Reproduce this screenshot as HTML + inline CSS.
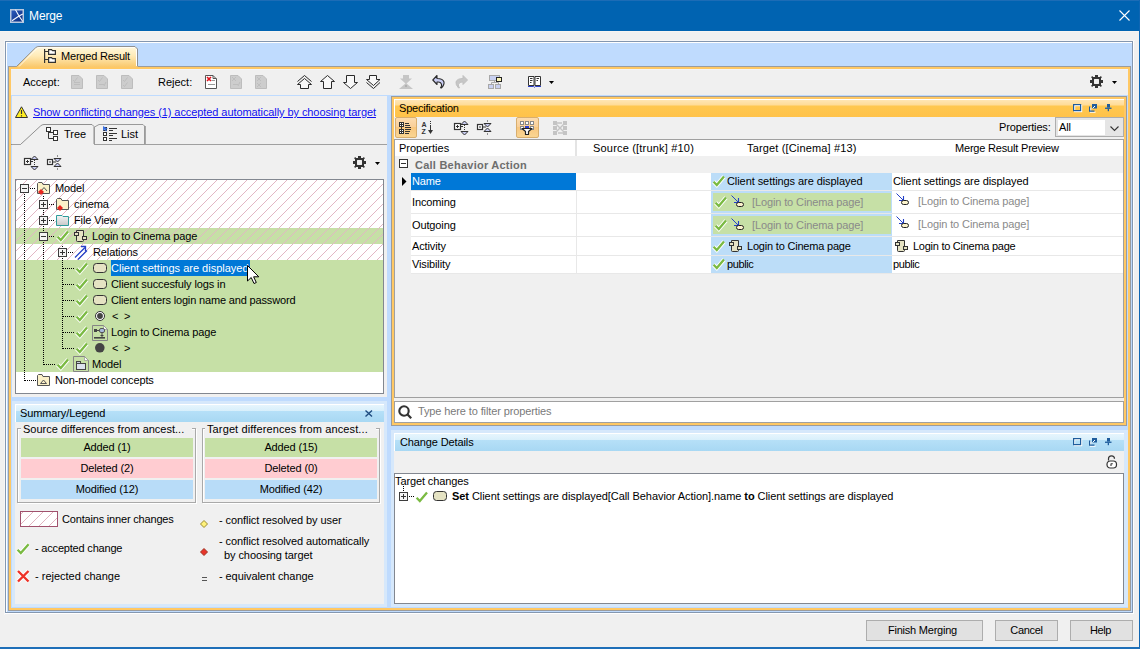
<!DOCTYPE html>
<html><head><meta charset="utf-8"><title>Merge</title>
<style>
*{box-sizing:border-box;margin:0;padding:0}
html,body{width:1140px;height:649px;overflow:hidden;background:#F0F0F0;font-family:"Liberation Sans",sans-serif;font-size:11px;color:#000}
.a{position:absolute}
.t{position:absolute;white-space:nowrap;line-height:13px;font-size:11px;letter-spacing:-0.12px}
svg{position:absolute;overflow:visible}
</style></head><body>
<!-- TITLE BAR -->
<div class="a" style="left:0;top:0;width:1140px;height:31px;background:#0063B1"></div>
<div class="a" style="left:0;top:31px;width:1140px;height:1px;background:#F7F4F1"></div>
<div class="a" style="left:0;top:0;width:1140px;height:1px;background:#1C6CB6"></div>
<div class="a" style="left:1139px;top:0;width:1px;height:649px;background:#0F66B3"></div>
<div class="a" style="left:0;top:647px;width:1140px;height:2px;background:#1E6FB8"></div>
<svg style="left:10px;top:9px" width="14" height="14" viewBox="0 0 14 14"><defs><linearGradient id="tig" x1="0" y1="0" x2="1" y2="1"><stop offset="0" stop-color="#2C5CC0"/><stop offset="1" stop-color="#0A2A7A"/></linearGradient></defs><rect x="0.75" y="0.75" width="12.5" height="12.5" fill="url(#tig)" stroke="#B8C8E0" stroke-width="1.5"/><path d="M5.5 0.8 L9 7 L12.8 12.5 M2 11.8 L9 7 L12.8 5" stroke="#F4F8FF" stroke-width="1.1" fill="none"/></svg>
<div class="t" style="left:29px;top:9px;font-size:12px;line-height:15px;color:#fff">Merge</div>
<svg style="left:1119px;top:10px" width="11" height="11" viewBox="0 0 11 11"><path d="M0.5 0.5 L10.5 10.5 M10.5 0.5 L0.5 10.5" stroke="#fff" stroke-width="1.1"/></svg>

<!-- OUTER PANEL -->
<div class="a" style="left:4px;top:40px;width:1131px;height:575px;border-left:1px solid #F7F7F7;border-top:1px solid #F7F7F7"></div>
<div class="a" style="left:5px;top:41px;width:1128px;height:572px;border:1px solid #8497B0;background:#BFDBFE"></div>
<div class="a" style="left:6px;top:42px;width:1px;height:570px;background:#fff"></div>
<div class="a" style="left:6px;top:42px;width:1126px;height:1px;background:#fff"></div>
<div class="a" style="left:5px;top:613px;width:1129px;height:1px;background:#fff"></div>
<div class="a" style="left:1133px;top:41px;width:1px;height:573px;background:#fff"></div>

<!-- ORANGE FRAME -->
<div class="a" style="left:8px;top:66px;width:1123px;height:545px;border:1px solid #9C9C9C;background:#FFC864"></div>
<div class="a" style="left:11px;top:69px;width:1117px;height:539px;background:#F0F0F0"></div>
<div class="a" style="left:11px;top:69px;width:1117px;height:1px;background:#F3F5F8"></div>

<!-- TAB Merged Result -->
<svg style="left:0;top:0" width="160" height="70" viewBox="0 0 160 70">
 <defs><linearGradient id="tabg" x1="0" y1="0" x2="0" y2="1"><stop offset="0" stop-color="#FFF8DE"/><stop offset="0.45" stop-color="#FFEBB8"/><stop offset="1" stop-color="#F9C86C"/></linearGradient></defs>
 <path d="M16 67 L35.5 47.8 Q36.8 46.5 39 46.5 H135 L137.5 49 V67 Z" fill="url(#tabg)"/>
 <path d="M16.5 66.5 L35.5 47.8 Q36.8 46.5 39 46.5 H135 L137.5 49 V66" fill="none" stroke="#8F8F8F" stroke-width="1"/>
 <path d="M19 66.5 L36.5 48.8 Q37.5 47.6 39 47.6 H135" fill="none" stroke="#FFFFFF" stroke-width="1" opacity="0.8"/>
 <path d="M136.5 49 V66" fill="none" stroke="#FFFFFF" stroke-width="1"/>
</svg>
<svg style="left:44px;top:49px" width="13" height="15"><path d="M0.6 0 V14 M0.6 2.5 H4 M0.6 10.5 H4" stroke="#333" stroke-width="1.2" fill="none"/><path d="M4.6 0.6 H7.5 L8.5 1.6 H11.4 V5.4 H4.6 Z M4.6 8.6 H7.5 L8.5 9.6 H11.4 V13.4 H4.6 Z" fill="#fff" stroke="#333" stroke-width="1.2"/></svg>
<div class="t" style="left:61px;top:50px;letter-spacing:-0.2px">Merged Result</div>

<!-- MAIN TOOLBAR -->
<div class="t" style="left:23px;top:76px;letter-spacing:0px">Accept:</div>
<div class="t" style="left:158px;top:76px;letter-spacing:0px">Reject:</div>

<!-- accept disabled -->
<svg style="left:71px;top:75px" width="12" height="14"><path d="M0.5 0.5 H8 L11.5 4 V13.5 H0.5 Z" fill="#CDCDCD" stroke="#BDBDBD"/><path d="M2 5 L3.5 6.5 L6.5 2.5 M3 9.5 H9 M3 7.5 H9" stroke="#BEBEBE" fill="none"/></svg>
<svg style="left:96px;top:75px" width="12" height="14"><path d="M0.5 0.5 H8 L11.5 4 V13.5 H0.5 Z" fill="#CDCDCD" stroke="#BDBDBD"/><path d="M2 5 L3.5 6.5 L6.5 2.5 M3 9.5 H8 M10 7 L8 11" stroke="#BEBEBE" fill="none"/></svg>
<svg style="left:121px;top:75px" width="12" height="14"><path d="M0.5 0.5 H8 L11.5 4 V13.5 H0.5 Z" fill="#CDCDCD" stroke="#BDBDBD"/><path d="M2 5 L3.5 6.5 L6.5 2.5 M2 10 L3.5 11.5 L6.5 7.5" stroke="#BEBEBE" fill="none"/></svg>
<!-- reject -->
<svg style="left:205px;top:75px" width="12" height="14"><path d="M0.5 0.5 H8 L11.5 4 V13.5 H0.5 Z" fill="#fff" stroke="#555"/><path d="M8 0.5 V3.5 H11.5" fill="none" stroke="#555"/><path d="M2 2 L6 6 M6 2 L2 6" stroke="#E0141E" stroke-width="1.6"/><path d="M6.5 5.5 H10 M3 9.5 H10" stroke="#999" fill="none"/></svg>
<svg style="left:230px;top:75px" width="12" height="14"><path d="M0.5 0.5 H8 L11.5 4 V13.5 H0.5 Z" fill="#CDCDCD" stroke="#BDBDBD"/><path d="M2 2 L6 6 M6 2 L2 6 M3 9.5 H8 M10 7 L8 11" stroke="#BEBEBE" fill="none"/></svg>
<svg style="left:255px;top:75px" width="12" height="14"><path d="M0.5 0.5 H8 L11.5 4 V13.5 H0.5 Z" fill="#CDCDCD" stroke="#BDBDBD"/><path d="M2 2 L6 6 M6 2 L2 6 M2 8 L6 12 M6 8 L2 12" stroke="#BEBEBE" fill="none"/></svg>
<!-- arrows -->
<svg style="left:297px;top:75px" width="15" height="15"><path d="M0.5 6.5 L7.5 0.5 L14.5 6.5" fill="none" stroke="#2A2A2A"/><path d="M7.5 3.5 L14.5 9.5 H11.5 V13.5 H3.5 V9.5 H0.5 Z" fill="#F8F8F8" stroke="#2A2A2A"/></svg>
<svg style="left:320px;top:75px" width="15" height="15"><path d="M7.5 0.5 L14.5 6.5 H11.5 V13.5 H3.5 V6.5 H0.5 Z" fill="#F8F8F8" stroke="#2A2A2A"/></svg>
<svg style="left:343px;top:75px" width="15" height="15"><path d="M3.5 0.5 H11.5 V7.5 H14.5 L7.5 13.5 L0.5 7.5 H3.5 Z" fill="#F8F8F8" stroke="#2A2A2A"/></svg>
<svg style="left:366px;top:75px" width="15" height="15"><path d="M3.5 0.5 H10.5 V4.5 H14 L7.5 10.5 L0.5 4.5 H3.5 Z" fill="#F8F8F8" stroke="#2A2A2A"/><path d="M0.5 7.5 L7.5 13.5 L14 7.5" fill="none" stroke="#2A2A2A"/></svg>
<!-- disabled funnel -->
<svg style="left:399px;top:75px" width="14" height="14"><path d="M4 0 H10 V3.5 H13 L7 9 L1 3.5 H4 Z" fill="#C6C6C6"/><path d="M7 8 L14 14 H0 Z" fill="#C6C6C6"/><rect x="6" y="10" width="2" height="2" fill="#B0B0B0"/></svg>
<!-- undo / redo -->
<svg style="left:432px;top:75px" width="14" height="14"><path d="M5 0.5 L0.8 5 L5 9.5 V7 Q9 6.5 9.5 9.5 Q10 11 8.5 12.8 L9.5 13 Q12.5 9.5 12 7 Q11 3.5 5 3.5 Z" fill="#C8CCF2" stroke="#2A2A2A" stroke-width="1.1" stroke-linejoin="round"/></svg>
<svg style="left:455px;top:75px" width="14" height="14"><path d="M8 0.5 L12.5 5 L8 9.5 V7 Q4 6.5 3.5 9.5 Q3 11 4.5 12.8 L3.5 13 Q0.5 9.5 1 7 Q2 3.5 8 3.5 Z" fill="#C6C6C6" stroke="#C0C0C0" stroke-width="1"/></svg>
<!-- hierarchy -->
<svg style="left:488px;top:75px" width="14" height="14"><rect x="1.5" y="0.5" width="10" height="5" fill="#C8D0F0" stroke="#A8A8A8"/><path d="M6.5 5.5 V7.5 M3.5 7.5 H10.5 M3.5 7.5 V9 M10.5 7.5 V9" stroke="#A8A8A8" fill="none"/><rect x="0.5" y="9.5" width="5" height="4" fill="#C8D0F0" stroke="#A8A8A8"/><rect x="7.5" y="9.5" width="5" height="4" fill="#C8D0F0" stroke="#A8A8A8"/><rect x="8.5" y="2.5" width="5" height="4" fill="#FAF6B8" stroke="#222"/></svg>
<!-- book -->
<svg style="left:528px;top:76px" width="14" height="12"><path d="M0.5 0.5 H6 V9.5 H0.5 Z M7 0.5 H12.5 V9.5 H7 Z" fill="#fff" stroke="#333"/><path d="M2 2.5 H4.5 M2 4.5 H4.5 M2 6.5 H3.5 M8.5 2.5 H11 M8.5 4.5 H10" stroke="#333"/><path d="M0 10.5 H5.5 L6.5 11.3 L7.5 10.5 H13" stroke="#2B3FD0" fill="none"/></svg>
<svg style="left:549px;top:81px" width="6" height="4"><path d="M0 0 H5 L2.5 3 Z" fill="#000"/></svg>
<!-- gear -->
<svg style="left:1089px;top:74px" width="15" height="15" viewBox="0 0 15 15"><path fill-rule="evenodd" fill="#333" d="M3 3 H12 V12 H3 Z M5.8 5 H9.2 L10 5.8 V9.2 L9.2 10 H5.8 L5 9.2 V5.8 Z M6 1 H9 V3 H6 Z M6 12 H9 V14 H6 Z M1 6 H3 V9 H1 Z M12 6 H14 V9 H12 Z"/><path d="M2.6 2.6 L4.5 4.5 M12.4 2.6 L10.5 4.5 M2.6 12.4 L4.5 10.5 M12.4 12.4 L10.5 10.5" stroke="#333" stroke-width="1.6"/><path fill="#F0F0F0" d="M5.8 5 H9.2 L10 5.8 V9.2 L9.2 10 H5.8 L5 9.2 V5.8 Z"/></svg>
<svg style="left:1112px;top:81px" width="6" height="4"><path d="M0 0 H5 L2.5 3 Z" fill="#000"/></svg>

<div class="a" style="left:11px;top:95px;width:1117px;height:1px;background:#BFDBFE"></div>

<!-- SPLITTER AREA -->
<div class="a" style="left:11px;top:96px;width:1117px;height:512px;background:#BFDBFE"></div>
<!-- LEFT PANEL -->
<div class="a" style="left:12px;top:96px;width:375px;height:301px;background:#F0F0F0"></div>

<!-- warning + link -->
<svg style="left:15px;top:106px" width="14" height="13"><path d="M6.5 0.8 L12.5 11.5 H0.5 Z" fill="#FFEE22" stroke="#333" stroke-linejoin="miter"/><path d="M6.5 4 V8 M6.5 9.3 V10.5" stroke="#333" stroke-width="1.2"/></svg>
<div class="t" style="left:33px;top:106px;color:#1010F0;text-decoration:underline;letter-spacing:-0.08px">Show conflicting changes (1) accepted automatically by choosing target</div>
<!-- tabs -->
<svg style="left:11px;top:120px" width="140" height="26">
 <path d="M0 24.5 H9.5 L29.5 6 Q31 4.5 33 4.5 H81 L83 6.5 V24.5" fill="#F0F0F0" stroke="#8F8F8F"/>
 <path d="M83.5 24.5 V7 L88 4.5 H132 L133.5 6 V24.5" fill="#F0F0F0" stroke="#9A9A9A"/>
 <path d="M134.5 6 V24.5" stroke="#A8A8A8"/>
 <path d="M84 24.5 H140" stroke="#9A9A9A"/>
</svg>
<div class="a" style="left:12px;top:144px;width:375px;height:1px;background:#A0A0A0"></div>
<div class="a" style="left:21px;top:144px;width:73px;height:1px;background:#F0F0F0"></div>
<svg style="left:46px;top:127px" width="14" height="14"><rect x="0.5" y="0.5" width="4" height="4" fill="#fff" stroke="#333"/><rect x="7.5" y="3.5" width="4" height="4" fill="#fff" stroke="#333"/><rect x="7.5" y="9.5" width="4" height="4" fill="#fff" stroke="#333"/><path d="M2.5 4.5 V11.5 H7.5 M2.5 5.5 H7.5" fill="none" stroke="#333"/></svg>
<div class="t" style="left:64px;top:128px;letter-spacing:0px">Tree</div>
<svg style="left:103px;top:126px" width="15" height="16"><rect x="0.5" y="1.5" width="3" height="3" fill="#fff" stroke="#333"/><path d="M0 0 V5 L1.5 3.5 L3 5.5 L4 5 L3 3 H5 Z" fill="#3A6FE0"/><rect x="0.5" y="6.5" width="3" height="3" fill="#fff" stroke="#333"/><rect x="0.5" y="11.5" width="3" height="3" fill="#fff" stroke="#333"/><path d="M6 2.5 H14 M6 4.5 H10 M6 7.5 H14 M6 9.5 H10 M6 12.5 H14 M6 14.5 H9" stroke="#333"/></svg>
<div class="t" style="left:121px;top:128px;letter-spacing:0px">List</div>
<!-- expand/collapse icons -->
<svg style="left:23px;top:155px" width="17" height="17"><rect x="1.5" y="3.5" width="6" height="6" fill="#fff" stroke="#333" stroke-width="1.2"/><path d="M3 6.5 H6 M4.5 5 V8 M7.5 6.5 H10" stroke="#333"/><path d="M11.5 1 L15 4.5 H8 Z" fill="#C8CCF2" stroke="#333"/><path d="M8 11.5 H15 L11.5 15 Z" fill="#C8CCF2" stroke="#333"/><path d="M11.5 5 V11" stroke="#333" stroke-dasharray="1 1"/></svg>
<svg style="left:46px;top:155px" width="17" height="17"><rect x="1.5" y="4.5" width="5" height="5" fill="#fff" stroke="#333" stroke-width="1.2"/><path d="M3 7 H5 M7 7 H10" stroke="#333"/><path d="M8 3.5 H15 L11.5 7 Z" fill="#C8CCF2" stroke="#333"/><path d="M11.5 8 L15 11.5 H8 Z" fill="#C8CCF2" stroke="#333"/><rect x="11" y="0.5" width="1" height="1" fill="#333"/><rect x="11" y="13.5" width="1" height="1" fill="#333"/></svg>
<svg style="left:352px;top:155px" width="15" height="15" viewBox="0 0 15 15"><path fill-rule="evenodd" fill="#333" d="M3 3 H12 V12 H3 Z M5.8 5 H9.2 L10 5.8 V9.2 L9.2 10 H5.8 L5 9.2 V5.8 Z M6 1 H9 V3 H6 Z M6 12 H9 V14 H6 Z M1 6 H3 V9 H1 Z M12 6 H14 V9 H12 Z"/><path d="M2.6 2.6 L4.5 4.5 M12.4 2.6 L10.5 4.5 M2.6 12.4 L4.5 10.5 M12.4 12.4 L10.5 10.5" stroke="#333" stroke-width="1.6"/><path fill="#F0F0F0" d="M5.8 5 H9.2 L10 5.8 V9.2 L9.2 10 H5.8 L5 9.2 V5.8 Z"/></svg>
<svg style="left:375px;top:162px" width="6" height="4"><path d="M0 0 H5 L2.5 3 Z" fill="#000"/></svg>
<!-- TREE BOX -->
<div class="a" style="left:15px;top:179px;width:369px;height:215px;border:1px solid #828790;background:#fff"></div>
<svg style="left:16px;top:180px" width="367" height="80"><defs><pattern id="hatch" patternUnits="userSpaceOnUse" width="10" height="10" x="1" y="0"><path d="M-1 11 L11 -1" stroke="#E2B6C4" stroke-width="1"/></pattern></defs><rect x="0" y="48" width="367" height="16" fill="#C6E0A6"/><rect width="367" height="80" fill="url(#hatch)"/></svg>
<div class="a" style="left:16px;top:260px;width:367px;height:112px;background:#C6E0A6"></div>
<div class="a" style="left:24px;top:194px;width:1px;height:187px;background:repeating-linear-gradient(#000 0 1px,transparent 1px 2px)"></div>
<div class="a" style="left:43px;top:196px;width:1px;height:169px;background:repeating-linear-gradient(#000 0 1px,transparent 1px 2px)"></div>
<div class="a" style="left:62px;top:246px;width:1px;height:103px;background:repeating-linear-gradient(#000 0 1px,transparent 1px 2px)"></div>
<svg style="left:20px;top:184px" width="9" height="9"><rect x="0.5" y="0.5" width="8" height="8" fill="#F4F4F4" stroke="#3C3C3C"/><path d="M2 4.5 H7" stroke="#333"/></svg>
<div class="a" style="left:30px;top:188px;width:6px;height:1px;background:repeating-linear-gradient(90deg,#000 0 1px,transparent 1px 2px)"></div>
<svg style="left:37px;top:182px" width="14" height="13"><path d="M0.5 1.5 V11.5 H12.5 V2.5 H6 L5 0.5 H1.5 Z" fill="#FBF1C8" stroke="#555"/><path d="M4 9 L7 5.5 L10 9" fill="none" stroke="#555"/><path d="M4 7 L7 10 L4 13 L1 10 Z" fill="#E8251E"/></svg>
<div class="t" style="left:55px;top:182px;letter-spacing:-0.1px">Model</div>
<svg style="left:39px;top:200px" width="9" height="9"><rect x="0.5" y="0.5" width="8" height="8" fill="#F4F4F4" stroke="#3C3C3C"/><path d="M2 4.5 H7" stroke="#333"/><path d="M4.5 2 V7" stroke="#333"/></svg>
<div class="a" style="left:49px;top:204px;width:6px;height:1px;background:repeating-linear-gradient(90deg,#000 0 1px,transparent 1px 2px)"></div>
<svg style="left:56px;top:198px" width="14" height="13"><path d="M0.5 1.5 V11.5 H12.5 V2.5 H6 L5 0.5 H1.5 Z" fill="#FBF1C8" stroke="#555"/><path d="M4 7 L7 10 L4 13 L1 10 Z" fill="#E8251E"/></svg>
<div class="t" style="left:74px;top:198px">cinema</div>
<svg style="left:39px;top:216px" width="9" height="9"><rect x="0.5" y="0.5" width="8" height="8" fill="#F4F4F4" stroke="#3C3C3C"/><path d="M2 4.5 H7" stroke="#333"/><path d="M4.5 2 V7" stroke="#333"/></svg>
<div class="a" style="left:49px;top:220px;width:6px;height:1px;background:repeating-linear-gradient(90deg,#000 0 1px,transparent 1px 2px)"></div>
<svg style="left:56px;top:215px" width="14" height="11"><defs><linearGradient id="fv" x1="0" y1="0" x2="0" y2="1"><stop offset="0" stop-color="#F4F4F4"/><stop offset="1" stop-color="#C8C8C8"/></linearGradient></defs><path d="M0.5 0.5 H6 L7 1.5 H12.5 V10.5 H0.5 Z" fill="url(#fv)" stroke="#2E9A9A"/></svg>
<div class="t" style="left:74px;top:214px">File View</div>
<svg style="left:39px;top:232px" width="9" height="9"><rect x="0.5" y="0.5" width="8" height="8" fill="#F4F4F4" stroke="#3C3C3C"/><path d="M2 4.5 H7" stroke="#333"/></svg>
<div class="a" style="left:49px;top:236px;width:6px;height:1px;background:repeating-linear-gradient(90deg,#000 0 1px,transparent 1px 2px)"></div>
<svg style="left:55px;top:229px" width="16" height="15"><path d="M2.6 7.8 L5.8 11 L13 2.6" fill="none" stroke="#fff" stroke-width="4.2" stroke-linecap="butt" stroke-linejoin="miter"/><path d="M2.6 7.8 L5.8 11 L13 2.6" fill="none" stroke="#7ABA42" stroke-width="2.3"/></svg>
<svg style="left:74px;top:230px" width="14" height="13"><path d="M2.5 0.5 H9.5 V10.5 Q9.5 11.5 8.5 11.5 H3.5 Q2.5 11.5 2.5 10.5 Z" fill="#E6E3C4" stroke="#333"/><rect x="0.5" y="2.5" width="4" height="3" fill="#E6E3C4" stroke="#333"/><rect x="8.5" y="6.5" width="4" height="3" fill="#E6E3C4" stroke="#333"/></svg>
<div class="t" style="left:92px;top:230px">Login to Cinema page</div>
<svg style="left:58px;top:248px" width="9" height="9"><rect x="0.5" y="0.5" width="8" height="8" fill="#F4F4F4" stroke="#3C3C3C"/><path d="M2 4.5 H7" stroke="#333"/><path d="M4.5 2 V7" stroke="#333"/></svg>
<div class="a" style="left:68px;top:252px;width:6px;height:1px;background:repeating-linear-gradient(90deg,#000 0 1px,transparent 1px 2px)"></div>
<svg style="left:74px;top:245px" width="14" height="15"><path d="M1 12.5 L11 2.5 M4 14.5 L13 5.5" stroke="#2440C8" stroke-width="1.3" fill="none"/><path d="M7 1.5 H11.5 V6" stroke="#2440C8" stroke-width="1.3" fill="none"/></svg>
<div class="t" style="left:93px;top:246px">Relations</div>
<div class="a" style="left:63px;top:268px;width:11px;height:1px;background:repeating-linear-gradient(90deg,#000 0 1px,transparent 1px 2px)"></div>
<svg style="left:74px;top:261px" width="16" height="15"><path d="M2.6 7.8 L5.8 11 L13 2.6" fill="none" stroke="#fff" stroke-width="4.2" stroke-linecap="butt" stroke-linejoin="miter"/><path d="M2.6 7.8 L5.8 11 L13 2.6" fill="none" stroke="#7ABA42" stroke-width="2.3"/></svg>
<svg style="left:93px;top:263px" width="15" height="11"><rect x="0.5" y="0.5" width="13" height="9" rx="3" ry="3" fill="#E5E3C3" stroke="#333"/></svg>
<div class="a" style="left:111px;top:260px;width:139px;height:16px;background:#0078D7"></div>
<div class="t" style="left:111px;top:262px;color:#fff;letter-spacing:0px">Client settings are displayed</div>
<div class="a" style="left:63px;top:284px;width:11px;height:1px;background:repeating-linear-gradient(90deg,#000 0 1px,transparent 1px 2px)"></div>
<svg style="left:74px;top:277px" width="16" height="15"><path d="M2.6 7.8 L5.8 11 L13 2.6" fill="none" stroke="#fff" stroke-width="4.2" stroke-linecap="butt" stroke-linejoin="miter"/><path d="M2.6 7.8 L5.8 11 L13 2.6" fill="none" stroke="#7ABA42" stroke-width="2.3"/></svg>
<svg style="left:93px;top:279px" width="15" height="11"><rect x="0.5" y="0.5" width="13" height="9" rx="3" ry="3" fill="#E5E3C3" stroke="#333"/></svg>
<div class="t" style="left:111px;top:278px">Client succesfuly logs in</div>
<div class="a" style="left:63px;top:300px;width:11px;height:1px;background:repeating-linear-gradient(90deg,#000 0 1px,transparent 1px 2px)"></div>
<svg style="left:74px;top:293px" width="16" height="15"><path d="M2.6 7.8 L5.8 11 L13 2.6" fill="none" stroke="#fff" stroke-width="4.2" stroke-linecap="butt" stroke-linejoin="miter"/><path d="M2.6 7.8 L5.8 11 L13 2.6" fill="none" stroke="#7ABA42" stroke-width="2.3"/></svg>
<svg style="left:93px;top:295px" width="15" height="11"><rect x="0.5" y="0.5" width="13" height="9" rx="3" ry="3" fill="#E5E3C3" stroke="#333"/></svg>
<div class="t" style="left:111px;top:294px;letter-spacing:-0.155px">Client enters login name and password</div>
<div class="a" style="left:63px;top:316px;width:11px;height:1px;background:repeating-linear-gradient(90deg,#000 0 1px,transparent 1px 2px)"></div>
<svg style="left:74px;top:309px" width="16" height="15"><path d="M2.6 7.8 L5.8 11 L13 2.6" fill="none" stroke="#fff" stroke-width="4.2" stroke-linecap="butt" stroke-linejoin="miter"/><path d="M2.6 7.8 L5.8 11 L13 2.6" fill="none" stroke="#7ABA42" stroke-width="2.3"/></svg>
<svg style="left:95px;top:311px" width="11" height="11"><circle cx="5" cy="5" r="4.5" fill="#fff" stroke="#333" stroke-width="1"/><circle cx="5" cy="5" r="2.9" fill="#444"/></svg>
<div class="t" style="left:112px;top:310px;letter-spacing:1.3px">&lt; &gt;</div>
<div class="a" style="left:63px;top:332px;width:11px;height:1px;background:repeating-linear-gradient(90deg,#000 0 1px,transparent 1px 2px)"></div>
<svg style="left:74px;top:325px" width="16" height="15"><path d="M2.6 7.8 L5.8 11 L13 2.6" fill="none" stroke="#fff" stroke-width="4.2" stroke-linecap="butt" stroke-linejoin="miter"/><path d="M2.6 7.8 L5.8 11 L13 2.6" fill="none" stroke="#7ABA42" stroke-width="2.3"/></svg>
<svg style="left:92px;top:325px" width="16" height="16"><path d="M0.5 0.5 H11.5 L15.5 4.5 V15.5 H0.5 Z" fill="none" stroke="#858585"/><path d="M11.5 0.5 V4.5 H15.5 Z" fill="#fff" stroke="#858585" stroke-width="0.6"/><rect x="2" y="4" width="3" height="3" fill="#444"/><path d="M5 5.5 H8" stroke="#444"/><rect x="7.5" y="3.5" width="5" height="4" rx="1.5" fill="#A8BCDC" stroke="#555"/><path d="M10 7.5 V12 M8.5 10.5 H11.5" stroke="#444"/><rect x="2" y="12" width="11" height="1.6" fill="#444"/></svg>
<div class="t" style="left:111px;top:326px">Login to Cinema page</div>
<div class="a" style="left:63px;top:348px;width:11px;height:1px;background:repeating-linear-gradient(90deg,#000 0 1px,transparent 1px 2px)"></div>
<svg style="left:74px;top:341px" width="16" height="15"><path d="M2.6 7.8 L5.8 11 L13 2.6" fill="none" stroke="#fff" stroke-width="4.2" stroke-linecap="butt" stroke-linejoin="miter"/><path d="M2.6 7.8 L5.8 11 L13 2.6" fill="none" stroke="#7ABA42" stroke-width="2.3"/></svg>
<svg style="left:95px;top:343px" width="11" height="11"><circle cx="4.8" cy="4.8" r="4.8" fill="#444"/></svg>
<div class="t" style="left:112px;top:342px;letter-spacing:1.3px">&lt; &gt;</div>
<div class="a" style="left:44px;top:364px;width:11px;height:1px;background:repeating-linear-gradient(90deg,#000 0 1px,transparent 1px 2px)"></div>
<svg style="left:55px;top:357px" width="16" height="15"><path d="M2.6 7.8 L5.8 11 L13 2.6" fill="none" stroke="#fff" stroke-width="4.2" stroke-linecap="butt" stroke-linejoin="miter"/><path d="M2.6 7.8 L5.8 11 L13 2.6" fill="none" stroke="#7ABA42" stroke-width="2.3"/></svg>
<svg style="left:73px;top:356px" width="16" height="16"><path d="M0.5 0.5 H11.5 L15.5 4.5 V15.5 H0.5 Z" fill="none" stroke="#858585"/><path d="M11.5 0.5 V4.5 H15.5 Z" fill="#fff" stroke="#858585" stroke-width="0.6"/><rect x="3.5" y="5.5" width="4" height="2" fill="#C8D0E0" stroke="#444"/><rect x="3.5" y="7.5" width="9" height="6" fill="#DCE2EE" stroke="#444"/></svg>
<div class="t" style="left:92px;top:358px;letter-spacing:-0.1px">Model</div>
<div class="a" style="left:25px;top:380px;width:11px;height:1px;background:repeating-linear-gradient(90deg,#000 0 1px,transparent 1px 2px)"></div>
<svg style="left:37px;top:374px" width="14" height="13"><path d="M0.5 1.5 V11.5 H12.5 V2.5 H6 L5 0.5 H1.5 Z" fill="#FBF1C8" stroke="#555"/><path d="M3.5 9.5 L6.5 6 L9.5 9.5 Z" fill="none" stroke="#555"/></svg>
<div class="t" style="left:55px;top:374px">Non-model concepts</div>
<svg style="left:247px;top:265px" width="13" height="20"><path d="M0.5 0.5 V16 L4.2 12.5 L7 18.5 L9.3 17.5 L6.6 11.8 H11.8 Z" fill="#fff" stroke="#000" stroke-width="1"/></svg>
<!-- SUMMARY PANEL -->
<div class="a" style="left:12px;top:401px;width:375px;height:206px;background:#D6E8FB"></div>
<div class="a" style="left:15px;top:404px;width:369px;height:200px;background:#F0F0F0"></div>
<div class="a" style="left:15px;top:404px;width:369px;height:1px;background:#FFFFFF"></div>
<div class="a" style="left:15px;top:404px;width:1px;height:18px;background:#fff"></div>
<div class="a" style="left:16px;top:405px;width:368px;height:17px;background:linear-gradient(#E6F5FD 0,#D8EFFB 6px,#B6E0F8 6px,#A8D8F3 100%)"></div>
<div class="t" style="left:20px;top:407px">Summary/Legend</div>
<svg style="left:365px;top:410px" width="8" height="7"><path d="M0.5 0.5 L7 6.5 M7 0.5 L0.5 6.5" stroke="#1F4C80" stroke-width="1.4"/></svg>
<div class="a" style="left:17px;top:428px;width:179px;height:75px;border:1px solid #A9A9A9;border-right-color:#A9A9A9;box-shadow:inset 1px 1px 0 #fff, 1px 1px 0 #fff"></div>
<div class="t" style="left:21px;top:423px;background:#F0F0F0;padding:0 8px 0 2px;letter-spacing:0px">Source differences from ancest...</div>
<div class="a" style="left:21px;top:438px;width:172px;height:19px;background:#C6E0A6"></div>
<div class="t" style="left:21px;top:441px;width:172px;text-align:center">Added (1)</div>
<div class="a" style="left:21px;top:459px;width:172px;height:19px;background:#FFCCD1"></div>
<div class="t" style="left:21px;top:462px;width:172px;text-align:center">Deleted (2)</div>
<div class="a" style="left:21px;top:480px;width:172px;height:19px;background:#B8DCF8"></div>
<div class="t" style="left:21px;top:483px;width:172px;text-align:center">Modified (12)</div>
<div class="a" style="left:202px;top:428px;width:178px;height:75px;border:1px solid #A9A9A9;border-right-color:#A9A9A9;box-shadow:inset 1px 1px 0 #fff, 1px 1px 0 #fff"></div>
<div class="t" style="left:205px;top:423px;background:#F0F0F0;padding:0 8px 0 2px;letter-spacing:0.12px">Target differences from ancest...</div>
<div class="a" style="left:205px;top:438px;width:172px;height:19px;background:#C6E0A6"></div>
<div class="t" style="left:205px;top:441px;width:172px;text-align:center">Added (15)</div>
<div class="a" style="left:205px;top:459px;width:172px;height:19px;background:#FFCCD1"></div>
<div class="t" style="left:205px;top:462px;width:172px;text-align:center">Deleted (0)</div>
<div class="a" style="left:205px;top:480px;width:172px;height:19px;background:#B8DCF8"></div>
<div class="t" style="left:205px;top:483px;width:172px;text-align:center">Modified (42)</div>
<svg style="left:20px;top:511px" width="39" height="17"><defs><pattern id="hatch2" patternUnits="userSpaceOnUse" width="10" height="10" x="4" y="0"><path d="M-1 11 L11 -1" stroke="#E0B4C0" stroke-width="1"/></pattern></defs><rect x="0.5" y="0.5" width="37" height="15" fill="#fff" stroke="#A0506C"/><rect x="1" y="1" width="37" height="15" fill="url(#hatch2)"/><rect x="0.5" y="0.5" width="37" height="15" fill="none" stroke="#A0506C"/></svg>
<div class="t" style="left:62px;top:513px;letter-spacing:-0.18px">Contains inner changes</div>
<svg style="left:15px;top:542px" width="16" height="15"><path d="M2.6 7.8 L5.8 11 L13.6 2.2" fill="none" stroke="#fff" stroke-width="4.2"/><path d="M2.6 7.8 L5.8 11 L13.6 2.2" fill="none" stroke="#7ABA42" stroke-width="2.3"/></svg>
<div class="t" style="left:35px;top:542px;letter-spacing:-0.19px">- accepted change</div>
<svg style="left:16px;top:569px" width="15" height="15"><path d="M2 2 L12.5 12.5 M12.5 2 L2 12.5" stroke="#fff" stroke-width="4"/><path d="M2 2 L12.5 12.5 M12.5 2 L2 12.5" stroke="#EE3328" stroke-width="2.4"/></svg>
<div class="t" style="left:35px;top:570px;letter-spacing:0px">- rejected change</div>
<svg style="left:200px;top:520px" width="9" height="9"><path d="M4 0.5 L7.5 4 L4 7.5 L0.5 4 Z" fill="#FFF27A" stroke="#9A8A30"/></svg>
<div class="t" style="left:219px;top:514px;letter-spacing:-0.08px">- conflict resolved by user</div>
<svg style="left:200px;top:548px" width="9" height="9"><path d="M4 0.5 L7.5 4 L4 7.5 L0.5 4 Z" fill="#E8342A" stroke="#A03020"/></svg>
<div class="t" style="left:219px;top:535px;letter-spacing:-0.08px">- conflict resolved automatically</div>
<div class="t" style="left:224px;top:549px;letter-spacing:-0.08px">by choosing target</div>
<svg style="left:202px;top:577px" width="6" height="5"><path d="M0 0.5 H5 M0 3.5 H5" stroke="#555"/></svg>
<div class="t" style="left:219px;top:570px;letter-spacing:-0.08px">- equivalent change</div>

<!-- SPEC PANEL -->
<div class="a" style="left:391px;top:96px;width:736px;height:330px;border:1px solid #9C9C9C;background:#FFC864"></div>
<div class="a" style="left:394px;top:99px;width:730px;height:324px;background:#F0F0F0"></div>
<div class="a" style="left:394px;top:99px;width:730px;height:18px;background:#fff"></div>
<div class="a" style="left:395px;top:100px;width:729px;height:17px;background:linear-gradient(#FFE6B4 0,#FFDC98 5px,#FFC850 6px,#FFC24A 100%)"></div>
<div class="t" style="left:399px;top:102px;letter-spacing:-0.2px">Specification</div>
<svg style="left:1073px;top:104px" width="10" height="9"><rect x="1.6" y="1.6" width="7" height="6" fill="none" stroke="#fff" stroke-width="1.2"/><rect x="0.6" y="0.6" width="7" height="6" fill="none" stroke="#1F5C9C" stroke-width="1.2"/></svg>
<svg style="left:1089px;top:104px" width="10" height="9"><path d="M1.6 3.5 V8.2 H6.5" fill="none" stroke="#fff" stroke-width="1.2"/><path d="M0.6 2.5 V7.2 H5.5" fill="none" stroke="#1F5C9C" stroke-width="1.2"/><rect x="3" y="0" width="5" height="4.5" fill="#1F5C9C"/><path d="M3.5 4.5 L6 2" stroke="#fff" stroke-width="1"/></svg>
<svg style="left:1105px;top:104px" width="8" height="9"><rect x="2" y="0" width="3" height="3.6" fill="#1F5C9C"/><rect x="0" y="3.6" width="6.5" height="1.3" fill="#1F5C9C"/><rect x="2.7" y="4.9" width="1.3" height="2.3" fill="#1F5C9C"/></svg>
<div class="a" style="left:395px;top:117px;width:22px;height:21px;border:1px solid #D8AE6E;border-radius:2px;background:linear-gradient(#FCDCB0 0,#F9D09A 45%,#F8C780 50%,#FAD592 100%)"></div>
<div class="a" style="left:516px;top:117px;width:23px;height:21px;border:1px solid #D8AE6E;border-radius:2px;background:linear-gradient(#FCDCB0 0,#F9D09A 45%,#F8C780 50%,#FAD592 100%)"></div>
<svg style="left:399px;top:122px" width="13" height="13"><rect x="0.5" y="0.5" width="4" height="4" fill="#fff" stroke="#333"/><rect x="0.5" y="7.5" width="4" height="4" fill="#fff" stroke="#333"/><path d="M2.5 0.5 V4.5 M0.5 2.5 H4.5 M2.5 7.5 V11.5 M0.5 9.5 H4.5 M2.5 4.5 V7.5" stroke="#333"/><path d="M6 1.5 H10 M6 3.5 H11 M6 5.5 H12 M6 7.5 H12 M6 9.5 H11 M6 11.5 H10" stroke="#333"/></svg>
<svg style="left:421px;top:121px" width="13" height="15"><text x="0.5" y="6" font-family="Liberation Sans" font-size="7" font-weight="bold" fill="#333">A</text><text x="0.5" y="13" font-family="Liberation Sans" font-size="7" font-weight="bold" fill="#333">Z</text><path d="M9.5 0 V1 M9.5 2 V3 M9.5 4 V11" stroke="#333"/><path d="M7 9 H12 L9.5 13 Z" fill="#333"/></svg>
<svg style="left:453px;top:120px" width="17" height="17"><rect x="1.5" y="3.5" width="6" height="6" fill="#fff" stroke="#333" stroke-width="1.2"/><path d="M3 6.5 H6 M4.5 5 V8 M7.5 6.5 H10" stroke="#333"/><path d="M11.5 1 L15 4.5 H8 Z" fill="#C8CCF2" stroke="#333"/><path d="M8 11.5 H15 L11.5 15 Z" fill="#C8CCF2" stroke="#333"/><path d="M11.5 5 V11" stroke="#333" stroke-dasharray="1 1"/></svg>
<svg style="left:476px;top:120px" width="17" height="17"><rect x="1.5" y="4.5" width="5" height="5" fill="#fff" stroke="#333" stroke-width="1.2"/><path d="M3 7 H5 M7 7 H10" stroke="#333"/><path d="M8 3.5 H15 L11.5 7 Z" fill="#C8CCF2" stroke="#333"/><path d="M11.5 8 L15 11.5 H8 Z" fill="#C8CCF2" stroke="#333"/><rect x="11" y="0.5" width="1" height="1" fill="#333"/><rect x="11" y="13.5" width="1" height="1" fill="#333"/></svg>
<svg style="left:520px;top:121px" width="15" height="14"><rect x="0.5" y="0.5" width="3" height="3" fill="#fff" stroke="#888"/><rect x="5.5" y="0.5" width="3" height="3" fill="#fff" stroke="#888"/><rect x="10.5" y="0.5" width="3" height="3" fill="#fff" stroke="#888"/><rect x="0.5" y="5.5" width="3" height="3" fill="#fff" stroke="#888"/><rect x="10.5" y="5.5" width="3" height="3" fill="#fff" stroke="#888"/><rect x="5" y="5" width="4" height="3" fill="#2B3FD0"/><path d="M2 7.5 H12 L8.5 10.5 V13.5 H5.5 V10.5 Z" fill="#fff" stroke="#222" stroke-width="1.2" stroke-linejoin="round"/></svg>
<svg style="left:553px;top:121px" width="14" height="14"><g fill="#C4C4C4"><rect x="0" y="0" width="4" height="4"/><rect x="10" y="0" width="4" height="4"/><rect x="0" y="5" width="4" height="4"/><rect x="10" y="5" width="4" height="4"/><rect x="0" y="10" width="4" height="4"/><rect x="10" y="10" width="4" height="4"/></g><path d="M3 3 L11 11 M11 3 L3 11 M4 2 H9 M5 12 H10" stroke="#C4C4C4" stroke-width="1.4"/></svg>
<div class="t" style="left:999px;top:121px;letter-spacing:-0.14px">Properties:</div>
<div class="a" style="left:1055px;top:117px;width:69px;height:20px;border:1px solid #ADADAD;background:#E5E5E5"></div>
<div class="a" style="left:1058px;top:120px;width:47px;height:15px;background:#fff"></div>
<div class="t" style="left:1059px;top:121px">All</div>
<svg style="left:1110px;top:126px" width="10" height="6"><path d="M0.5 0.5 L4.5 4.5 L8.5 0.5" fill="none" stroke="#333" stroke-width="1.1"/></svg>
<div class="a" style="left:394px;top:139px;width:730px;height:259px;background:#F0F0F0"></div>
<div class="a" style="left:394px;top:139px;width:730px;height:1px;background:#A0A0A0"></div>
<div class="a" style="left:394px;top:140px;width:729px;height:16px;background:#fff"></div>
<div class="a" style="left:575px;top:140px;width:2px;height:16px;background:#E4E4E4"></div>
<div class="t" style="left:399px;top:142px;letter-spacing:0px">Properties</div>
<div class="t" style="left:593px;top:142px;letter-spacing:0.19px">Source ([trunk] #10)</div>
<div class="t" style="left:747px;top:142px;letter-spacing:0.15px">Target ([Cinema] #13)</div>
<div class="t" style="left:955px;top:142px;letter-spacing:-0.19px">Merge Result Preview</div>
<div class="a" style="left:1123px;top:139px;width:1px;height:259px;background:#A0A0A0"></div>
<div class="a" style="left:394px;top:139px;width:1px;height:259px;background:#A0A0A0"></div>
<svg style="left:399px;top:159px" width="10" height="10"><rect x="0.5" y="0.5" width="8" height="8" fill="#fff" stroke="#333"/><path d="M2 4.5 H7" stroke="#333"/></svg>
<div class="t" style="left:415px;top:159px;font-weight:bold;color:#6E6E6E;letter-spacing:0.24px">Call Behavior Action</div>
<div class="a" style="left:411px;top:173px;width:712px;height:17px;background:#fff"></div>
<div class="a" style="left:411px;top:190px;width:712px;height:1px;background:#E8E8E8"></div>
<div class="a" style="left:411px;top:191px;width:712px;height:22px;background:#fff"></div>
<div class="a" style="left:411px;top:213px;width:712px;height:1px;background:#E8E8E8"></div>
<div class="a" style="left:411px;top:214px;width:712px;height:22px;background:#fff"></div>
<div class="a" style="left:411px;top:236px;width:712px;height:1px;background:#E8E8E8"></div>
<div class="a" style="left:411px;top:237px;width:712px;height:18px;background:#fff"></div>
<div class="a" style="left:411px;top:255px;width:712px;height:1px;background:#E8E8E8"></div>
<div class="a" style="left:411px;top:256px;width:712px;height:17px;background:#fff"></div>
<div class="a" style="left:411px;top:273px;width:712px;height:1px;background:#E8E8E8"></div>
<div class="a" style="left:576px;top:190px;width:1px;height:83px;background:#E8E8E8"></div>
<div class="a" style="left:411px;top:173px;width:165px;height:17px;background:#0078D7"></div>
<svg style="left:402px;top:177px" width="5" height="9"><path d="M0 0 L4.5 4.5 L0 9 Z" fill="#000"/></svg>
<div class="t" style="left:412px;top:175px;color:#fff">Name</div>
<div class="t" style="left:412px;top:196px">Incoming</div>
<div class="t" style="left:412px;top:219px">Outgoing</div>
<div class="t" style="left:412px;top:240px">Activity</div>
<div class="t" style="left:412px;top:258px">Visibility</div>
<div class="a" style="left:711px;top:173px;width:181px;height:17px;background:#BCDDF8"></div>
<div class="a" style="left:711px;top:191px;width:181px;height:22px;background:#BCDDF8"></div>
<div class="a" style="left:711px;top:214px;width:181px;height:22px;background:#BCDDF8"></div>
<div class="a" style="left:711px;top:237px;width:181px;height:18px;background:#BCDDF8"></div>
<div class="a" style="left:711px;top:256px;width:181px;height:17px;background:#BCDDF8"></div>
<div class="a" style="left:713px;top:193px;width:178px;height:18px;background:#C6E0A6"></div>
<div class="a" style="left:713px;top:216px;width:178px;height:18px;background:#C6E0A6"></div>
<svg style="left:711px;top:174px" width="16" height="15"><path d="M2.6 7.8 L5.8 11 L13 2.6" fill="none" stroke="#fff" stroke-width="4.2" stroke-linecap="butt" stroke-linejoin="miter"/><path d="M2.6 7.8 L5.8 11 L13 2.6" fill="none" stroke="#7ABA42" stroke-width="2.3"/></svg>
<svg style="left:713px;top:195px" width="16" height="15"><path d="M2.6 7.8 L5.8 11 L13 2.6" fill="none" stroke="#fff" stroke-width="4.2" stroke-linecap="butt" stroke-linejoin="miter"/><path d="M2.6 7.8 L5.8 11 L13 2.6" fill="none" stroke="#7ABA42" stroke-width="2.3"/></svg>
<svg style="left:713px;top:218px" width="16" height="15"><path d="M2.6 7.8 L5.8 11 L13 2.6" fill="none" stroke="#fff" stroke-width="4.2" stroke-linecap="butt" stroke-linejoin="miter"/><path d="M2.6 7.8 L5.8 11 L13 2.6" fill="none" stroke="#7ABA42" stroke-width="2.3"/></svg>
<svg style="left:711px;top:239px" width="16" height="15"><path d="M2.6 7.8 L5.8 11 L13 2.6" fill="none" stroke="#fff" stroke-width="4.2" stroke-linecap="butt" stroke-linejoin="miter"/><path d="M2.6 7.8 L5.8 11 L13 2.6" fill="none" stroke="#7ABA42" stroke-width="2.3"/></svg>
<svg style="left:711px;top:257px" width="16" height="15"><path d="M2.6 7.8 L5.8 11 L13 2.6" fill="none" stroke="#fff" stroke-width="4.2" stroke-linecap="butt" stroke-linejoin="miter"/><path d="M2.6 7.8 L5.8 11 L13 2.6" fill="none" stroke="#7ABA42" stroke-width="2.3"/></svg>
<svg style="left:731px;top:195px" width="14" height="13"><path d="M0.5 0.5 L7 7" stroke="#2440C8" stroke-width="1"/><path d="M3 7.5 H7.5 V3" fill="none" stroke="#2440C8" stroke-width="1.1"/><rect x="5.5" y="7.5" width="7" height="4" rx="2" fill="#FBF3CC" stroke="#222"/></svg>
<svg style="left:731px;top:218px" width="14" height="13"><path d="M0.5 0.5 L7 7" stroke="#2440C8" stroke-width="1"/><path d="M3 7.5 H7.5 V3" fill="none" stroke="#2440C8" stroke-width="1.1"/><rect x="5.5" y="7.5" width="7" height="4" rx="2" fill="#FBF3CC" stroke="#222"/></svg>
<svg style="left:896px;top:193px" width="14" height="13"><path d="M0.5 0.5 L7 7" stroke="#2440C8" stroke-width="1"/><path d="M3 7.5 H7.5 V3" fill="none" stroke="#2440C8" stroke-width="1.1"/><rect x="5.5" y="7.5" width="7" height="4" rx="2" fill="#FBF3CC" stroke="#222"/></svg>
<svg style="left:896px;top:216px" width="14" height="13"><path d="M0.5 0.5 L7 7" stroke="#2440C8" stroke-width="1"/><path d="M3 7.5 H7.5 V3" fill="none" stroke="#2440C8" stroke-width="1.1"/><rect x="5.5" y="7.5" width="7" height="4" rx="2" fill="#FBF3CC" stroke="#222"/></svg>
<svg style="left:729px;top:240px" width="14" height="13"><path d="M2.5 0.5 H9.5 V10.5 Q9.5 11.5 8.5 11.5 H3.5 Q2.5 11.5 2.5 10.5 Z" fill="#E6E3C4" stroke="#333"/><rect x="0.5" y="2.5" width="4" height="3" fill="#E6E3C4" stroke="#333"/><rect x="8.5" y="6.5" width="4" height="3" fill="#E6E3C4" stroke="#333"/></svg>
<svg style="left:895px;top:240px" width="14" height="13"><path d="M2.5 0.5 H9.5 V10.5 Q9.5 11.5 8.5 11.5 H3.5 Q2.5 11.5 2.5 10.5 Z" fill="#E6E3C4" stroke="#333"/><rect x="0.5" y="2.5" width="4" height="3" fill="#E6E3C4" stroke="#333"/><rect x="8.5" y="6.5" width="4" height="3" fill="#E6E3C4" stroke="#333"/></svg>
<div class="t" style="left:727px;top:175px;letter-spacing:-0.07px">Client settings are displayed</div>
<div class="t" style="left:752px;top:196px;color:#8A8A8A;letter-spacing:-0.12px">[Login to Cinema page]</div>
<div class="t" style="left:752px;top:219px;color:#8A8A8A;letter-spacing:-0.12px">[Login to Cinema page]</div>
<div class="t" style="left:747px;top:240px;letter-spacing:-0.2px">Login to Cinema page</div>
<div class="t" style="left:727px;top:258px;letter-spacing:-0.4px">public</div>
<div class="t" style="left:893px;top:175px;letter-spacing:-0.07px">Client settings are displayed</div>
<div class="t" style="left:918px;top:195px;color:#8A8A8A;letter-spacing:-0.12px">[Login to Cinema page]</div>
<div class="t" style="left:918px;top:218px;color:#8A8A8A;letter-spacing:-0.12px">[Login to Cinema page]</div>
<div class="t" style="left:913px;top:240px;letter-spacing:-0.26px">Login to Cinema page</div>
<div class="t" style="left:893px;top:258px;letter-spacing:-0.4px">public</div>
<div class="a" style="left:394px;top:397px;width:730px;height:1px;background:#A0A0A0"></div>
<div class="a" style="left:394px;top:401px;width:730px;height:22px;border:1px solid #A0A0A0;background:#fff"></div>
<svg style="left:398px;top:405px" width="15" height="15"><circle cx="6" cy="6" r="4.7" fill="none" stroke="#333" stroke-width="2.1"/><path d="M9.3 9.3 L13.2 13.2" stroke="#333" stroke-width="2.3"/></svg>
<div class="t" style="left:418px;top:405px;color:#7A7A7A">Type here to filter properties</div>

<!-- CHANGE DETAILS PANEL -->
<div class="a" style="left:391px;top:430px;width:737px;height:177px;background:#D6E8FB"></div>
<div class="a" style="left:394px;top:433px;width:730px;height:171px;background:#F0F0F0"></div>
<div class="a" style="left:394px;top:433px;width:730px;height:1px;background:#fff"></div>
<div class="a" style="left:394px;top:433px;width:1px;height:18px;background:#fff"></div>
<div class="a" style="left:395px;top:434px;width:729px;height:17px;background:linear-gradient(#E6F5FD 0,#D8EFFB 6px,#B6E0F8 6px,#A8D8F3 100%)"></div>
<div class="t" style="left:400px;top:436px">Change Details</div>
<svg style="left:1073px;top:438px" width="10" height="9"><rect x="1.6" y="1.6" width="7" height="6" fill="none" stroke="#fff" stroke-width="1.2"/><rect x="0.6" y="0.6" width="7" height="6" fill="none" stroke="#1F5C9C" stroke-width="1.2"/></svg>
<svg style="left:1089px;top:438px" width="10" height="9"><path d="M1.6 3.5 V8.2 H6.5" fill="none" stroke="#fff" stroke-width="1.2"/><path d="M0.6 2.5 V7.2 H5.5" fill="none" stroke="#1F5C9C" stroke-width="1.2"/><rect x="3" y="0" width="5" height="4.5" fill="#1F5C9C"/><path d="M3.5 4.5 L6 2" stroke="#fff" stroke-width="1"/></svg>
<svg style="left:1105px;top:438px" width="8" height="9"><rect x="2" y="0" width="3" height="3.6" fill="#1F5C9C"/><rect x="0" y="3.6" width="6.5" height="1.3" fill="#1F5C9C"/><rect x="2.7" y="4.9" width="1.3" height="2.3" fill="#1F5C9C"/></svg>
<svg style="left:1106px;top:455px" width="12" height="14"><path d="M2.5 5.5 V3.8 A3 3 0 0 1 8.5 3.8" fill="none" stroke="#333" stroke-width="1.2"/><rect x="1" y="6" width="9.5" height="7" rx="3.2" fill="#fff" stroke="#333" stroke-width="1.2"/><path d="M5 8.5 V11 M5 8.8 H6.8" stroke="#333" stroke-width="1.1"/></svg>
<div class="a" style="left:394px;top:473px;width:730px;height:131px;border:1px solid #828790;background:#fff"></div>
<div class="t" style="left:395px;top:475px">Target changes</div>
<div class="a" style="left:403px;top:486px;width:1px;height:6px;background:repeating-linear-gradient(#000 0 1px,transparent 1px 2px)"></div>
<svg style="left:399px;top:492px" width="9" height="9"><rect x="0.5" y="0.5" width="8" height="8" fill="#F4F4F4" stroke="#3C3C3C"/><path d="M2 4.5 H7 M4.5 2 V7" stroke="#333"/></svg>
<div class="a" style="left:409px;top:496px;width:6px;height:1px;background:repeating-linear-gradient(90deg,#000 0 1px,transparent 1px 2px)"></div>
<svg style="left:414px;top:490px" width="16" height="15"><path d="M2.6 7.8 L5.8 11 L13 2.6" fill="none" stroke="#fff" stroke-width="4.2" stroke-linecap="butt" stroke-linejoin="miter"/><path d="M2.6 7.8 L5.8 11 L13 2.6" fill="none" stroke="#7ABA42" stroke-width="2.3"/></svg>
<svg style="left:433px;top:491px" width="15" height="11"><rect x="0.5" y="0.5" width="13" height="9" rx="3" ry="3" fill="#E5E3C3" stroke="#333"/></svg>
<div class="t" style="left:452px;top:490px;letter-spacing:-0.06px"><b>Set</b> Client settings are displayed[Call Behavior Action].name <b>to</b> Client settings are displayed</div>

<!-- BUTTONS -->
<div class="a" style="left:866px;top:620px;width:117px;height:21px;border:1px solid #ADADAD;background:#E1E1E1"></div>
<div class="t" style="left:864px;top:624px;width:117px;text-align:center;letter-spacing:-0.23px">Finish Merging</div>
<div class="a" style="left:995px;top:620px;width:63px;height:21px;border:1px solid #ADADAD;background:#E1E1E1"></div>
<div class="t" style="left:995px;top:624px;width:63px;text-align:center;letter-spacing:-0.28px">Cancel</div>
<div class="a" style="left:1070px;top:620px;width:63px;height:21px;border:1px solid #ADADAD;background:#E1E1E1"></div>
<div class="t" style="left:1069px;top:624px;width:63px;text-align:center;letter-spacing:-0.43px">Help</div>
</body></html>
